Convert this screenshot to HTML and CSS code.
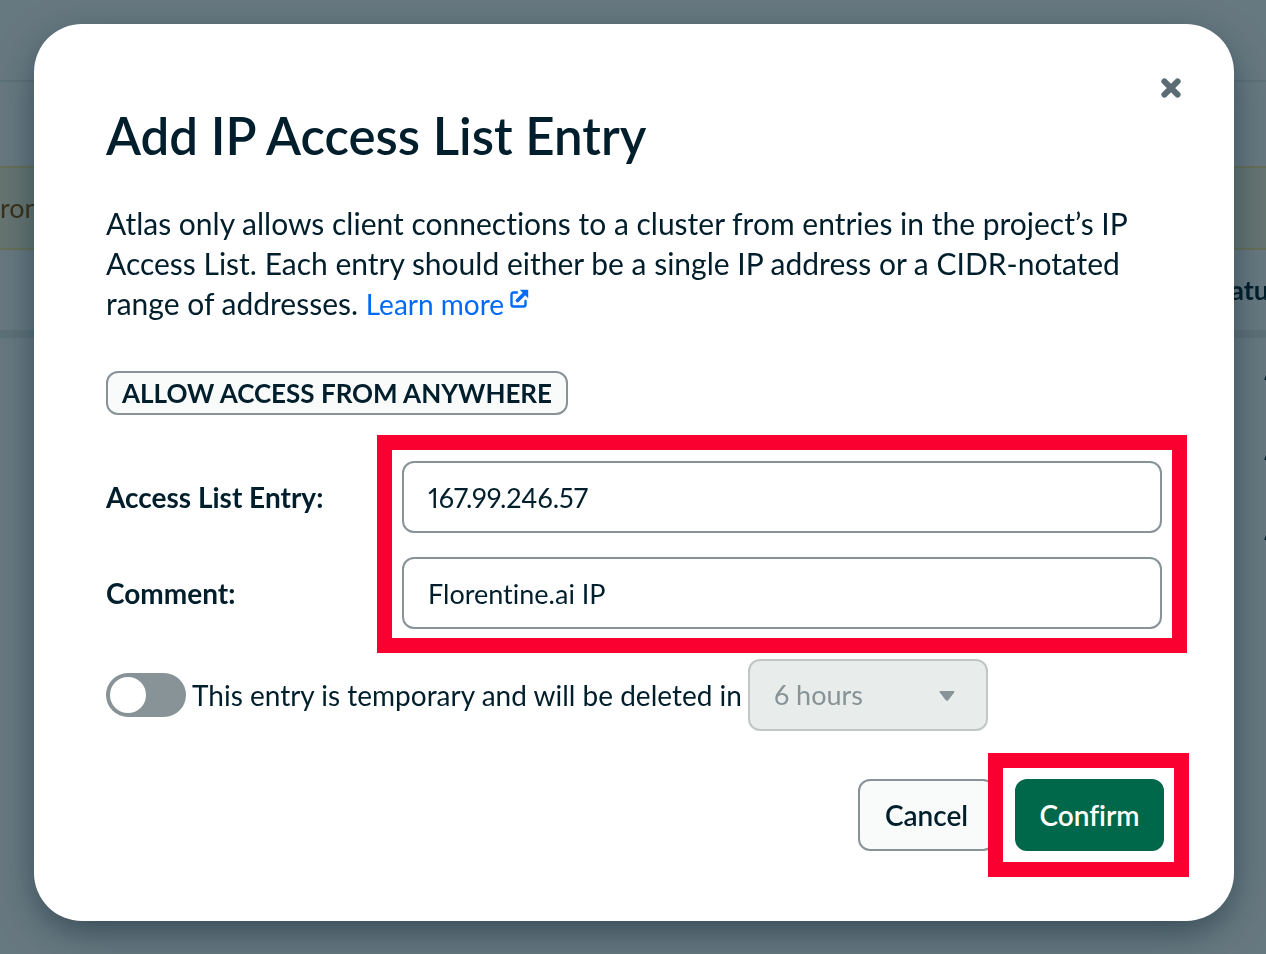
FILE: index.html
```html
<!DOCTYPE html>
<html lang="en">
<head>
<meta charset="utf-8">
<meta name="viewport" content="width=device-width, initial-scale=1">
<title>Add IP Access List Entry</title>
<link rel="stylesheet" href="styles.css">
</head>
<body>
<div class="page" aria-hidden="true">
  <div class="page-header"></div>
  <div class="page-banner">ron</div>
  <div class="page-thead"><span>Status</span></div>
  <div class="page-row"><span>A</span></div>
  <div class="page-row"><span>A</span></div>
  <div class="page-row"><span>A</span></div>
</div>
<div class="backdrop">
  <main class="modal" role="dialog" aria-modal="true" aria-labelledby="title">
    <button class="close" type="button" aria-label="Close">
      <svg viewBox="0 0 20 20" width="20" height="20"><path d="M3.4 3.4L16.6 16.6M16.6 3.4L3.4 16.6" stroke="currentColor" stroke-width="6" stroke-linecap="round"/></svg>
    </button>
    <h1 class="title" id="title">Add IP Access List Entry</h1>
    <p class="intro">Atlas only allows client connections to a cluster from entries in the project’s IP Access List. Each entry should either be a single IP address or a CIDR-notated range of addresses. <a class="link" href="#">Learn more<svg class="link-icon" viewBox="0 0 20 20" width="20" height="20" aria-hidden="true"><path d="M8 3.500H4.500Q2.500 3.500 2.500 5.500V15.500Q2.500 17.500 4.500 17.500H14.500Q16.500 17.500 16.500 15.500V12" fill="none" stroke="currentColor" stroke-width="2.400" stroke-linecap="round"/><path d="M8.500 11.500L15 5" stroke="currentColor" stroke-width="3.800" stroke-linecap="round"/><path d="M10.800 .8H18.500Q19.200 .8 19.200 1.500V9.200Z" fill="currentColor"/></svg></a></p>
    <button class="anywhere" type="button">ALLOW ACCESS FROM ANYWHERE</button>
    <form class="form">
      <div class="fields">
        <div class="labels">
          <label class="label" for="entry">Access List Entry:</label>
          <label class="label" for="comment">Comment:</label>
        </div>
        <div class="inputs">
          <input class="input" id="entry" type="text" value="167.99.246.57">
          <input class="input" id="comment" type="text" value="Florentine.ai IP">
          <span class="mark mark-fields"></span>
        </div>
      </div>
      <div class="temporary">
        <input class="toggle" id="temp" type="checkbox" role="switch">
        <label class="temp-label" for="temp">This entry is temporary and will be deleted in</label>
        <span class="select-wrap">
          <select class="select" aria-label="Delete after" disabled><option>6 hours</option></select>
          <svg class="caret" viewBox="0 0 16 10" width="16" height="10" aria-hidden="true"><path d="M1.500 0H14.500Q16 0 15.200 1.400L9.200 9.200Q8 10.500 6.800 9.200L.8 1.400Q0 0 1.500 0Z" fill="currentColor"/></svg>
        </span>
      </div>
      <div class="actions">
        <button class="button" type="button">Cancel</button>
        <span class="confirm-wrap">
          <button class="button primary" type="button">Confirm</button>
          <span class="mark mark-confirm"></span>
        </span>
      </div>
    </form>
  </main>
</div>
</body>
</html>
```

FILE: styles.css
```css
* { box-sizing: border-box; }

body {
  margin: 0;
  color: #001e2b;
  background: #fff;
  font-family: Lato, "Liberation Sans", sans-serif;
  font-size: 27px;
  line-height: 40px;
  font-variant-ligatures: none;
}

button, input, select {
  font: inherit;
  font-variant-ligatures: none;
  font-variant-numeric: proportional-nums;
  color: inherit;
}
button { cursor: pointer; }

/* Page behind the dialog */
.page {
  position: fixed;
  inset: 0;
  overflow: hidden;
}
.page-header {
  height: 82px;
  border-bottom: 2px solid #e8edeb;
}
.page-banner {
  height: 84px;
  margin-top: 84px;
  padding-top: 20px;
  border: solid #ffec9e;
  border-width: 2px 0;
  background: #fef7db;
  color: #944f01;
}
.page-thead {
  display: flex;
  justify-content: flex-end;
  height: 88px;
  padding-top: 20px;
  border-bottom: 8px solid #e8edeb;
  font-weight: 700;
}
.page-thead span { width: 60px; }
.page-row {
  display: flex;
  justify-content: flex-end;
  height: 80px;
  padding-top: 12px;
}
.page-row span { width: 2px; }

.backdrop {
  position: fixed;
  inset: 0;
  overflow: auto;
  padding: 24px 32px 32px 34px;
  background: rgba(0, 30, 43, 0.6);
}

/* Dialog */
.modal {
  position: relative;
  padding: 80px 72px 70px;
  border-radius: 48px;
  background: #fff;
  box-shadow: 0 12px 40px -6px rgba(0, 30, 43, 0.6);
}
.close {
  position: absolute;
  top: 46px;
  right: 45px;
  display: grid;
  place-items: center;
  width: 36px;
  height: 36px;
  padding: 0;
  border: 0;
  background: none;
  color: #5c6c75;
}
.title {
  margin: 0 0 35px;
  font-size: 51px;
  font-weight: 600;
  line-height: 64px;
}
.intro {
  margin: 0 0 48px;
  font-size: 30px;
}
.link {
  color: #016bf8;
  font-size: 28px;
  line-height: 1;
  text-decoration: none;
}
.link-icon {
  margin-left: 5px;
  vertical-align: 6px;
}
.anywhere {
  display: block;
  height: 44px;
  padding: 0 14px;
  border: 2px solid #889397;
  border-radius: 12px;
  background: #f9fbfa;
  font-size: 26px;
  font-weight: 700;
  line-height: 40px;
}

.fields {
  display: grid;
  grid-template-columns: 272px 1fr;
  gap: 24px;
  margin-top: 46px;
}
.labels, .inputs {
  display: grid;
  grid-auto-rows: 72px;
  gap: 24px;
  align-items: center;
}
.inputs { position: relative; }
.label {
  font-size: 28px;
  font-weight: 700;
}
.input {
  width: 100%;
  height: 72px;
  padding: 0 24px;
  border: 2px solid #889397;
  border-radius: 12px;
  background: #fff;
}
.mark {
  position: absolute;
  border: 15px solid #f90030;
  pointer-events: none;
}
.mark-fields { inset: -26px -25px -24px; }

.temporary {
  display: grid;
  grid-template-columns: 80px max-content 240px;
  align-items: center;
  gap: 6px;
  margin-top: 30px;
}
.temp-label { font-size: 28px; }
.toggle {
  appearance: none;
  width: 80px;
  height: 44px;
  margin: 0;
  padding: 4px;
  border-radius: 22px;
  background: #889397;
}
.toggle::before {
  content: "";
  display: block;
  width: 36px;
  height: 36px;
  border-radius: 50%;
  background: #fff;
}
.toggle:checked::before { margin-left: auto; }
.select-wrap { position: relative; }
.select {
  display: block;
  appearance: none;
  width: 100%;
  height: 72px;
  padding: 0 24px;
  border: 2px solid #c1c7c6;
  border-radius: 12px;
  background: #e8edeb;
  color: #889397;
  opacity: 1;
}
.caret {
  position: absolute;
  top: 32px;
  right: 33px;
  color: #889397;
}

.actions {
  display: flex;
  justify-content: flex-end;
  gap: 20px;
  margin: 48px -2px 0 0;
}
.button {
  min-width: 137px;
  height: 72px;
  padding: 0 22px;
  border: 2px solid #889397;
  border-radius: 12px;
  background: #f9fbfa;
  font-size: 28px;
  font-weight: 600;
}
.primary {
  min-width: 149px;
  border-color: #00684a;
  background: #00684a;
  color: #fff;
}
.confirm-wrap { position: relative; }
.mark-confirm { inset: -26px -25px -26px -27px; }
```
